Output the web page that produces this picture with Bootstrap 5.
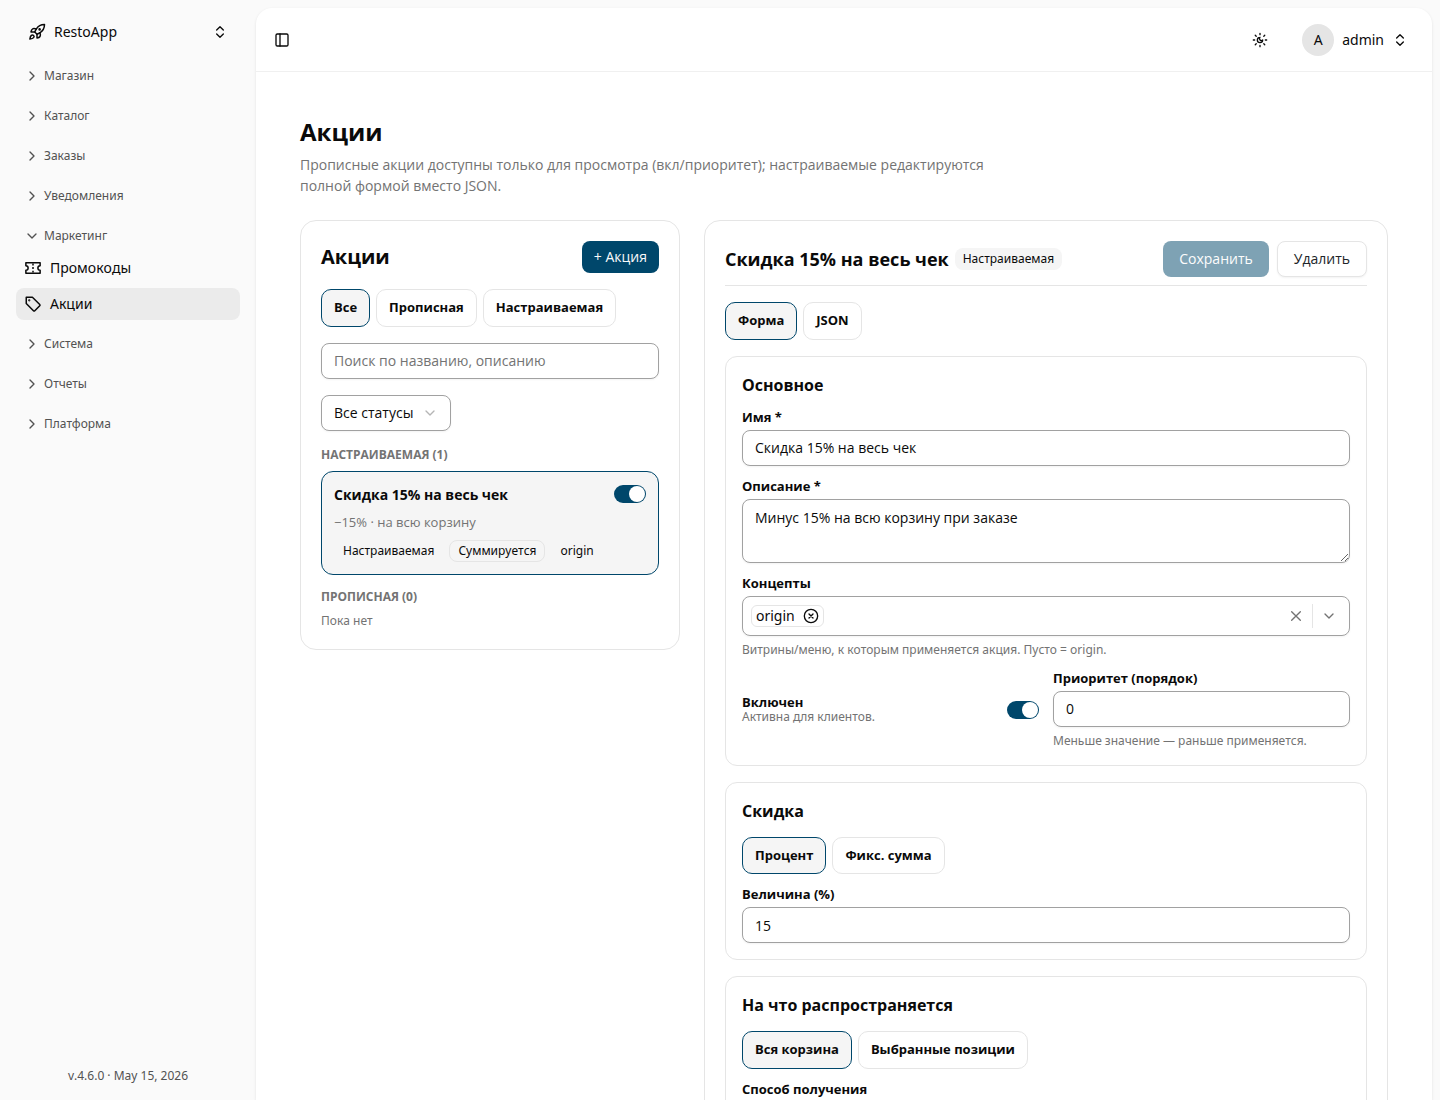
<!DOCTYPE html>
<html lang="ru">
<head>
<meta charset="utf-8">
<meta name="viewport" content="width=device-width, initial-scale=1">
<title>Акции — RestoApp</title>
<link href="https://cdn.jsdelivr.net/npm/bootstrap@5.3.0/dist/css/bootstrap.min.css" rel="stylesheet">
<style>
:root{--ink:#0a0a0a;--muted:#737373;--line:#e5e5e5;--field:#a1a1a1;--brand:#00476b;--soft:#f5f5f5}
body{font-family:"Noto Sans",sans-serif;font-size:14px;line-height:20px;color:var(--ink);background:#fafafa;font-kerning:none}
h1,h2,h3,.act,.chip,.lab,.field,.page-note,.promo-name,.tagline{font-family:"Open Sans","Noto Sans",sans-serif;font-kerning:auto}
svg.ico{width:16px;height:16px;fill:none;stroke:currentColor;stroke-width:2;stroke-linecap:round;stroke-linejoin:round;flex:none}
svg.ico-lg{width:18px;height:18px}
button{color:inherit}
.plain{background:none;border:0;padding:0}
.side{width:256px;flex:none;padding:16px}
.brand{height:32px;padding:0 12px;gap:8px;margin-bottom:12px;width:100%}
.groups{gap:8px}
.group-head{height:32px;padding:0 8px;gap:4px;font-size:12px;color:#525252;width:100%}
.side-link{height:32px;padding:0 8px;gap:8px;border-radius:8px;color:var(--ink);text-decoration:none}
.side-link.current{background:#ebebeb}
.side-links{gap:4px}
.version{font-size:12px;line-height:16px;color:#525252}
.sheet{background:#fff;margin:8px 8px 0 0;border-radius:16px 16px 0 0;box-shadow:0 1px 3px rgba(0,0,0,.1);min-width:0}
.topbar{height:64px;border-bottom:1px solid #f0f0f0;padding:0 24px 0 18px;flex:none}
.theme-btn{width:36px;height:36px}
.avatar{width:32px;height:32px;border-radius:50%;background:var(--line)}
.content{padding:44px;overflow-y:auto;scrollbar-width:none}
.page-title{font-size:24px;line-height:32px;font-weight:700;margin:0 0 6px}
.page-note{font-size:14px;line-height:21px;color:var(--muted);max-width:720px;margin:0 0 24px}
.panels{display:grid;grid-template-columns:380px minmax(0,1fr);gap:24px;align-items:start}
.panel{border:1px solid var(--line);border-radius:16px;padding:20px}
.panel-title{font-size:20px;line-height:28px;font-weight:700;margin:0}
.act{border-radius:8px;font-size:14px;line-height:20px;height:36px;padding:0 16px}
.act-sm{height:32px;padding:0 12px}
.act-brand,.act-brand:hover,.act-brand:disabled{background:var(--brand);color:#fafafa;border:0}
.act-line{background:#fff;border:1px solid var(--line);box-shadow:0 1px 2px rgba(0,0,0,.05)}
.chips{gap:6px}
.chip{border:1px solid var(--line);background:#fff;border-radius:10px;padding:8px 12px;font-size:13px;line-height:1.5;font-weight:700}
.chip.on{border-color:var(--brand);background:var(--soft)}
.field,.field:focus{display:block;width:100%;border:1px solid var(--field);border-radius:8px;height:36px;padding:0 12px;font-size:14px;line-height:20px;color:var(--ink);box-shadow:0 1px 2px rgba(0,0,0,.05);background:#fff}
.field::placeholder{color:var(--muted);opacity:1}
textarea.field,textarea.field:focus{height:64px;padding:8px 12px}
.status-pick{position:relative;width:130px}
.status-pick select{appearance:none}
.status-pick svg{position:absolute;right:13px;top:10px;color:#b5b5b5;pointer-events:none}
.caption{font-size:12px;line-height:16px;font-weight:700;color:var(--muted);margin:0 0 8px}
.promo{border:1px solid var(--brand);background:var(--soft);border-radius:12px;padding:12px;margin-bottom:14px}
.promo-name{font-size:14px;line-height:1.5;font-weight:700}
.tagline{font-size:13px;line-height:1.5;color:var(--muted)}
.pill{font-size:12px;line-height:16px;border:1px solid transparent;border-radius:8px;padding:2px 8px}
.pill-line{border-color:var(--line)}
.pill-soft{background:var(--soft);border:0;padding:3px 8px}
.toggle{appearance:none;width:32px;height:18px;border-radius:9px;background:var(--brand);margin:0;flex:none;display:block}
.toggle::before{content:"";display:block;width:16px;height:16px;border-radius:50%;background:#fff;margin:1px 1px 1px 15px}
.editor-head{border-bottom:1px solid var(--line);padding-bottom:8px;gap:8px}
.editor-title{font-size:18px;line-height:24px;font-weight:700;margin:0}
.block{border:1px solid var(--line);border-radius:12px;padding:16px;display:flex;flex-direction:column;gap:14px}
.block-title{font-size:16px;line-height:24px;font-weight:700;margin:0}
.item{display:flex;flex-direction:column;gap:6px}
.lab{display:block;font-size:13px;line-height:13px;font-weight:700;margin:0}
.hint{font-size:12px;line-height:16px;color:var(--muted)}
.multi{border:1px solid var(--field);border-radius:8px;height:40px;padding:0 12px 0 8px;box-shadow:0 1px 2px rgba(0,0,0,.05);color:var(--muted)}
.token{border:1px solid var(--line);border-radius:6px;height:22px;padding:0 4px;gap:8px;color:var(--ink)}
.bar{width:1px;height:24px;background:var(--line);margin:0 8px}
.pair{display:grid;grid-template-columns:1fr 1fr;gap:14px}
</style>
<script src="https://cdn.jsdelivr.net/npm/bootstrap@5.3.0/dist/js/bootstrap.bundle.min.js"></script>
</head>
<body>
<svg class="d-none">
<symbol id="right" viewBox="0 0 24 24"><path d="m9 18 6-6-6-6"/></symbol>
<symbol id="down" viewBox="0 0 24 24"><path d="m6 9 6 6 6-6"/></symbol>
<symbol id="updown" viewBox="0 0 24 24"><path d="m7 15 5 5 5-5"/><path d="m7 9 5-5 5 5"/></symbol>
</svg>
<div class="d-flex vh-100 overflow-hidden">
<aside class="side d-flex flex-column">
<button class="plain brand d-flex align-items-center" type="button">
<svg class="ico ico-lg" viewBox="0 0 24 24"><path d="M4.5 16.5c-1.5 1.26-2 5-2 5s3.74-.5 5-2c.71-.84.7-2.13-.09-2.91a2.18 2.18 0 0 0-2.91-.09z"/><path d="m12 15-3-3a22 22 0 0 1 2-3.95A12.88 12.88 0 0 1 22 2c0 2.72-.78 7.5-6 11a22.35 22.35 0 0 1-4 2z"/><path d="M9 12H4s.55-3.03 2-4c1.62-1.08 5 0 5 0"/><path d="M12 15v5s3.03-.55 4-2c1.08-1.62 0-5 0-5"/><circle cx="15.5" cy="8.5" r=".7" fill="currentColor"/></svg>
<span class="me-auto">RestoApp</span><svg class="ico"><use href="#updown"/></svg>
</button>
<nav class="groups d-flex flex-column">
<button class="plain group-head d-flex align-items-center" type="button"><svg class="ico"><use href="#right"/></svg>Магазин</button>
<button class="plain group-head d-flex align-items-center" type="button"><svg class="ico"><use href="#right"/></svg>Каталог</button>
<button class="plain group-head d-flex align-items-center" type="button"><svg class="ico"><use href="#right"/></svg>Заказы</button>
<button class="plain group-head d-flex align-items-center" type="button"><svg class="ico"><use href="#right"/></svg>Уведомления</button>
<div>
<button class="plain group-head d-flex align-items-center" type="button"><svg class="ico"><use href="#down"/></svg>Маркетинг</button>
<div class="side-links d-flex flex-column">
<a class="side-link d-flex align-items-center" href="#"><svg class="ico ico-lg" viewBox="0 0 24 24"><path d="M2.5 5h19v4a3 3 0 0 0 0 6v4h-19v-4a3 3 0 0 0 0-6z"/><path stroke-linecap="butt" d="M12 6v2.5M12 10.7v2.6M12 15.5v2.5"/></svg>Промокоды</a>
<a class="side-link current d-flex align-items-center" href="#" aria-current="page"><svg class="ico ico-lg" viewBox="0 0 24 24"><path d="M3 3h8.200L21 12.600a1.300 1.300 0 0 1 0 1.800L14.400 21a1.300 1.300 0 0 1-1.800 0L3 11.300z"/><circle cx="7" cy="7" r=".5" fill="currentColor"/></svg>Акции</a>
</div>
</div>
<button class="plain group-head d-flex align-items-center" type="button"><svg class="ico"><use href="#right"/></svg>Система</button>
<button class="plain group-head d-flex align-items-center" type="button"><svg class="ico"><use href="#right"/></svg>Отчеты</button>
<button class="plain group-head d-flex align-items-center" type="button"><svg class="ico"><use href="#right"/></svg>Платформа</button>
</nav>
<div class="version mt-auto text-center">v.4.6.0 · May 15, 2026</div>
</aside>
<main class="sheet flex-grow-1 d-flex flex-column">
<header class="topbar d-flex align-items-center">
<button class="plain d-flex me-auto" type="button" aria-label="Боковая панель"><svg class="ico" viewBox="0 0 24 24"><rect width="18" height="18" x="3" y="3" rx="2"/><path d="M9 3v18"/></svg></button>
<button class="plain theme-btn d-flex align-items-center justify-content-center me-4" type="button" aria-label="Тема"><svg class="ico" viewBox="0 0 24 24"><path d="M12 8a2.83 2.83 0 0 0 4 4 4 4 0 1 1-4-4"/><path d="M12 2v2M12 20v2M4.9 4.9l1.4 1.4M17.7 17.7l1.4 1.4M2 12h2M20 12h2M6.3 17.7l-1.4 1.4M19.1 4.9l-1.4 1.4"/></svg></button>
<button class="plain d-flex align-items-center gap-2" type="button"><span class="avatar d-flex align-items-center justify-content-center">A</span><span>admin</span><svg class="ico"><use href="#updown"/></svg></button>
</header>
<div class="content">
<h1 class="page-title">Акции</h1>
<p class="page-note">Прописные акции доступны только для просмотра (вкл/приоритет); настраиваемые редактируются полной формой вместо JSON.</p>
<div class="panels">
<section class="panel">
<div class="d-flex align-items-center justify-content-between mb-3"><h2 class="panel-title">Акции</h2><button class="btn act act-sm act-brand" type="button">+ Акция</button></div>
<div class="chips d-flex mb-3"><button class="chip on" type="button">Все</button><button class="chip" type="button">Прописная</button><button class="chip" type="button">Настраиваемая</button></div>
<input class="field mb-3" type="search" placeholder="Поиск по названию, описанию" aria-label="Поиск">
<div class="status-pick mb-3"><select class="field" aria-label="Статус"><option>Все статусы</option></select><svg class="ico"><use href="#down"/></svg></div>
<h3 class="caption">НАСТРАИВАЕМАЯ (1)</h3>
<div class="promo">
<div class="d-flex align-items-center justify-content-between mb-2"><span class="promo-name">Скидка 15% на весь чек</span><input class="toggle" type="checkbox" role="switch" checked aria-label="Скидка 15% на весь чек"></div>
<div class="tagline mb-2">−15% · на всю корзину</div>
<div class="d-flex chips"><span class="pill">Настраиваемая</span><span class="pill pill-line">Суммируется</span><span class="pill">origin</span></div>
</div>
<h3 class="caption">ПРОПИСНАЯ (0)</h3>
<div class="hint">Пока нет</div>
</section>
<section class="panel d-flex flex-column gap-3">
<div class="editor-head d-flex align-items-center">
<div class="chips d-flex align-items-center me-auto"><h2 class="editor-title">Скидка 15% на весь чек</h2><span class="pill pill-soft">Настраиваемая</span></div>
<button class="btn act act-brand opacity-50" type="button">Сохранить</button><button class="btn act act-line" type="button">Удалить</button>
</div>
<div class="chips d-flex"><button class="chip on" type="button">Форма</button><button class="chip" type="button">JSON</button></div>
<div class="block">
<h3 class="block-title">Основное</h3>
<div class="item"><label class="lab" for="name">Имя *</label>
<input class="field" id="name" type="text" value="Скидка 15% на весь чек"></div>
<div class="item"><label class="lab" for="about">Описание *</label>
<textarea class="field" id="about">Минус 15% на всю корзину при заказе</textarea></div>
<div class="item"><span class="lab" id="concepts">Концепты</span>
<div class="multi d-flex align-items-center" role="group" aria-labelledby="concepts">
<span class="token d-flex align-items-center me-auto">origin<button class="plain d-flex" type="button" aria-label="Убрать origin"><svg class="ico" viewBox="0 0 24 24"><circle cx="12" cy="12" r="10"/><path d="m15 9-6 6M9 9l6 6"/></svg></button></span>
<button class="plain d-flex" type="button" aria-label="Очистить"><svg class="ico" viewBox="0 0 24 24"><path d="M18.5 5.5l-13 13M5.5 5.5l13 13"/></svg></button><span class="bar"></span><button class="plain d-flex" type="button" aria-label="Открыть список"><svg class="ico"><use href="#down"/></svg></button>
</div>
<div class="hint">Витрины/меню, к которым применяется акция. Пусто = origin.</div></div>
<div class="pair">
<div class="d-flex align-items-center justify-content-between"><label for="enabled"><span class="lab">Включен</span><span class="hint d-block">Активна для клиентов.</span></label><input class="toggle" id="enabled" type="checkbox" role="switch" checked></div>
<div class="item"><label class="lab" for="order">Приоритет (порядок)</label><input class="field" id="order" type="text" inputmode="numeric" value="0"><div class="hint">Меньше значение — раньше применяется.</div></div>
</div>
</div>
<div class="block">
<h3 class="block-title">Скидка</h3>
<div class="chips d-flex"><button class="chip on" type="button">Процент</button><button class="chip" type="button">Фикс. сумма</button></div>
<div class="item"><label class="lab" for="amount">Величина (%)</label>
<input class="field" id="amount" type="text" inputmode="numeric" value="15"></div>
</div>
<div class="block">
<h3 class="block-title">На что распространяется</h3>
<div class="chips d-flex"><button class="chip on" type="button">Вся корзина</button><button class="chip" type="button">Выбранные позиции</button></div>
<span class="lab">Способ получения</span>
</div>
</section>
</div>
</div>
</main>
</div>
</body>
</html>
